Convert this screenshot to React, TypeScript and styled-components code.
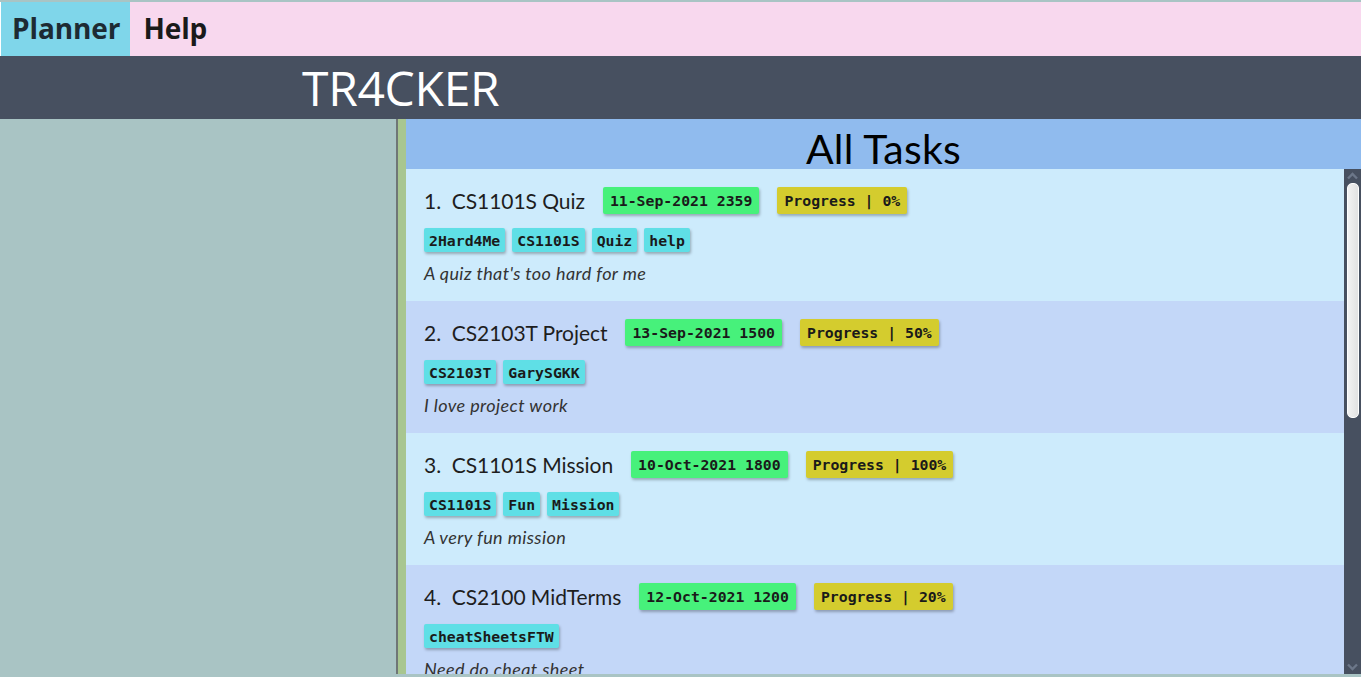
import styled, { createGlobalStyle } from 'styled-components';

const GlobalStyle = createGlobalStyle`
  html, body {
    margin: 0;
    padding: 0;
    height: 100%;
  }
  body {
    background: #ffffff;
    font-family: 'Open Sans', 'Noto Sans', sans-serif;
  }
  #root {
    height: 100%;
  }
`;

const Page = styled.div`
  height: 100%;
  display: flex;
  flex-direction: column;
  box-sizing: border-box;
  padding-top: 2px;
  background: #a9c4c4;
`;

const MenuBar = styled.nav`
  display: flex;
  height: 54px;
  padding-left: 1px;
  background: #f8d8ee;
  box-shadow: inset 1px 0 0 #ffffff;
`;

const MenuItem = styled.div<{ $active?: boolean }>`
  display: flex;
  align-items: center;
  padding: 0 10px 2px 11px;
  background: ${(p) => (p.$active ? '#7fd6ea' : 'transparent')};
  color: ${(p) => (p.$active ? '#1d2b33' : '#1a1a1a')};
  font-family: 'Open Sans', 'Noto Sans', sans-serif;
  font-weight: 700;
  font-size: 28px;
  letter-spacing: -0.1px;
  & + & {
    padding-left: 13px;
  }
`;

const TitleBar = styled.header`
  height: 63px;
  display: flex;
  align-items: center;
  padding-left: 302px;
  background: #475060;
  color: #ffffff;
  font-family: 'Open Sans', 'Noto Sans', sans-serif;
  font-size: 48px;
  font-weight: 400;
  letter-spacing: -0.3px;
  line-height: 1;
`;

const Body = styled.main`
  flex: 1;
  min-height: 0;
  display: flex;
  margin-bottom: 3px;
`;

const SidePanel = styled.aside`
  width: 396px;
  flex-shrink: 0;
  background: #a9c4c4;
`;

const Divider = styled.div`
  width: 8px;
  flex-shrink: 0;
  background: #a8c690;
  border-left: 2px solid #6f7676;
`;

const TaskPanel = styled.section`
  flex: 1;
  min-width: 0;
  display: flex;
  flex-direction: column;
`;

const PanelHeader = styled.h1`
  margin: 0;
  height: 50px;
  flex-shrink: 0;
  display: flex;
  align-items: center;
  justify-content: center;
  background: #90bbee;
  color: #000000;
  font-family: Lato, 'Open Sans', sans-serif;
  font-weight: 400;
  font-size: 41px;
  letter-spacing: 0.3px;
  padding-top: 8px;
  box-sizing: border-box;
`;

const ListArea = styled.div`
  flex: 1;
  min-height: 0;
  display: flex;
`;

const TaskList = styled.div`
  flex: 1;
  min-width: 0;
  overflow: hidden;
`;

const ScrollTrack = styled.div`
  width: 17px;
  flex-shrink: 0;
  background: #475060;
  display: flex;
  flex-direction: column;
  align-items: center;
`;

const ScrollArrow = styled.svg`
  width: 17px;
  height: 14px;
  flex-shrink: 0;
`;

const ScrollThumb = styled.div`
  width: 12px;
  height: 235px;
  margin-left: 1px;
  box-sizing: border-box;
  border-radius: 5px;
  border: 1px solid #ffffff;
  background: linear-gradient(to right, #f2f2f2, #e2e2e2);
`;

const Spacer = styled.div`
  flex: 1;
`;

const Card = styled.article<{ $alt: boolean }>`
  height: 132px;
  box-sizing: border-box;
  padding: 18px 18px 0 18px;
  background: ${(p) => (p.$alt ? '#c3d7f8' : '#cdebfc')};
  display: flex;
  flex-direction: column;
`;

const TitleRow = styled.div`
  display: flex;
  align-items: center;
  gap: 18px;
  height: 27px;
`;

const TaskName = styled.span`
  font-family: Lato, 'Open Sans', sans-serif;
  font-size: 21px;
  color: #1e1e1e;
  white-space: pre;
  letter-spacing: -0.05px;
`;

const Chip = styled.span<{ $kind: 'date' | 'progress' | 'tag' }>`
  display: inline-flex;
  align-items: center;
  box-sizing: border-box;
  height: ${(p) => (p.$kind === 'tag' ? '24px' : '27px')};
  padding: 0 ${(p) => (p.$kind === 'tag' ? '5px' : '7px')};
  border-radius: 2px;
  background: ${(p) =>
    p.$kind === 'date' ? '#47f17b' : p.$kind === 'progress' ? '#d4cc2e' : '#5fdfe6'};
  box-shadow: 1px 2px 3px rgba(0, 0, 0, 0.28);
  font-family: 'DejaVu Sans Mono', 'Liberation Mono', monospace;
  font-weight: 700;
  font-size: 14.8px;
  color: #1a1a1a;
  white-space: pre;
`;

const TagRow = styled.div`
  display: flex;
  gap: 7px;
  margin-top: 14px;
  height: 24px;
`;

const Description = styled.p`
  margin: 9px 0 0 0;
  font-family: Lato, 'Open Sans', sans-serif;
  font-style: italic;
  font-size: 18px;
  letter-spacing: 0.4px;
  color: #333333;
  line-height: 24px;
`;

interface Task {
  name: string;
  deadline: string;
  progress: number;
  tags: string[];
  description: string;
}

const tasks: Task[] = [
  {
    name: 'CS1101S Quiz',
    deadline: '11-Sep-2021 2359',
    progress: 0,
    tags: ['2Hard4Me', 'CS1101S', 'Quiz', 'help'],
    description: "A quiz that's too hard for me",
  },
  {
    name: 'CS2103T Project',
    deadline: '13-Sep-2021 1500',
    progress: 50,
    tags: ['CS2103T', 'GarySGKK'],
    description: 'I love project work',
  },
  {
    name: 'CS1101S Mission',
    deadline: '10-Oct-2021 1800',
    progress: 100,
    tags: ['CS1101S', 'Fun', 'Mission'],
    description: 'A very fun mission',
  },
  {
    name: 'CS2100 MidTerms',
    deadline: '12-Oct-2021 1200',
    progress: 20,
    tags: ['cheatSheetsFTW'],
    description: 'Need do cheat sheet',
  },
];

const TaskCard = ({ task, index }: { task: Task; index: number }) => (
  <Card $alt={index % 2 === 1}>
    <TitleRow>
      <TaskName>{`${index + 1}.  ${task.name}`}</TaskName>
      <Chip $kind="date">{task.deadline}</Chip>
      <Chip $kind="progress">{`Progress | ${task.progress}%`}</Chip>
    </TitleRow>
    <TagRow>
      {task.tags.map((tag) => (
        <Chip key={tag} $kind="tag">
          {tag}
        </Chip>
      ))}
    </TagRow>
    <Description>{task.description}</Description>
  </Card>
);

const Scrollbar = () => (
  <ScrollTrack>
    <ScrollArrow viewBox="0 0 17 14">
      <path d="M4 9.5 L8.5 5 L13 9.5" fill="none" stroke="#6c7789" strokeWidth="2.4" />
    </ScrollArrow>
    <ScrollThumb />
    <Spacer />
    <ScrollArrow viewBox="0 0 17 14">
      <path d="M4 4.5 L8.5 9 L13 4.5" fill="none" stroke="#6c7789" strokeWidth="2.4" />
    </ScrollArrow>
  </ScrollTrack>
);

export default function App() {
  return (
    <>
      <GlobalStyle />
      <Page>
        <MenuBar>
          <MenuItem $active>Planner</MenuItem>
          <MenuItem>Help</MenuItem>
        </MenuBar>
        <TitleBar>TR4CKER</TitleBar>
        <Body>
          <SidePanel />
          <Divider />
          <TaskPanel>
            <PanelHeader>All Tasks</PanelHeader>
            <ListArea>
              <TaskList>
                {tasks.map((task, i) => (
                  <TaskCard key={task.name} task={task} index={i} />
                ))}
              </TaskList>
              <Scrollbar />
            </ListArea>
          </TaskPanel>
        </Body>
      </Page>
    </>
  );
}
